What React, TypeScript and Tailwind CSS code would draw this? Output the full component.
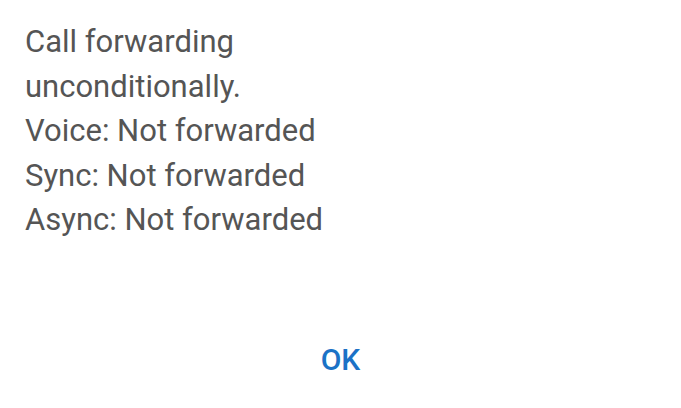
export default function App() {
  const lines = [
    "Call forwarding",
    "unconditionally.",
    "Voice: Not forwarded",
    "Sync: Not forwarded",
    "Async: Not forwarded",
  ];

  return (
    <div
      className="flex h-[408px] w-[681px] flex-col bg-white"
      style={{ fontFamily: "Roboto, sans-serif" }}
    >
      {/* message body */}
      <div className="flex-1 pl-[25px] pt-[20px] text-[31px] leading-[44.5px] text-[#555555]">
        {lines.map((line) => (
          <div key={line}>{line}</div>
        ))}
      </div>

      {/* dialog action */}
      <div className="flex justify-center pb-[33px]">
        <button className="text-[30px] font-medium leading-none text-[#1b72c6]">
          OK
        </button>
      </div>
    </div>
  );
}
